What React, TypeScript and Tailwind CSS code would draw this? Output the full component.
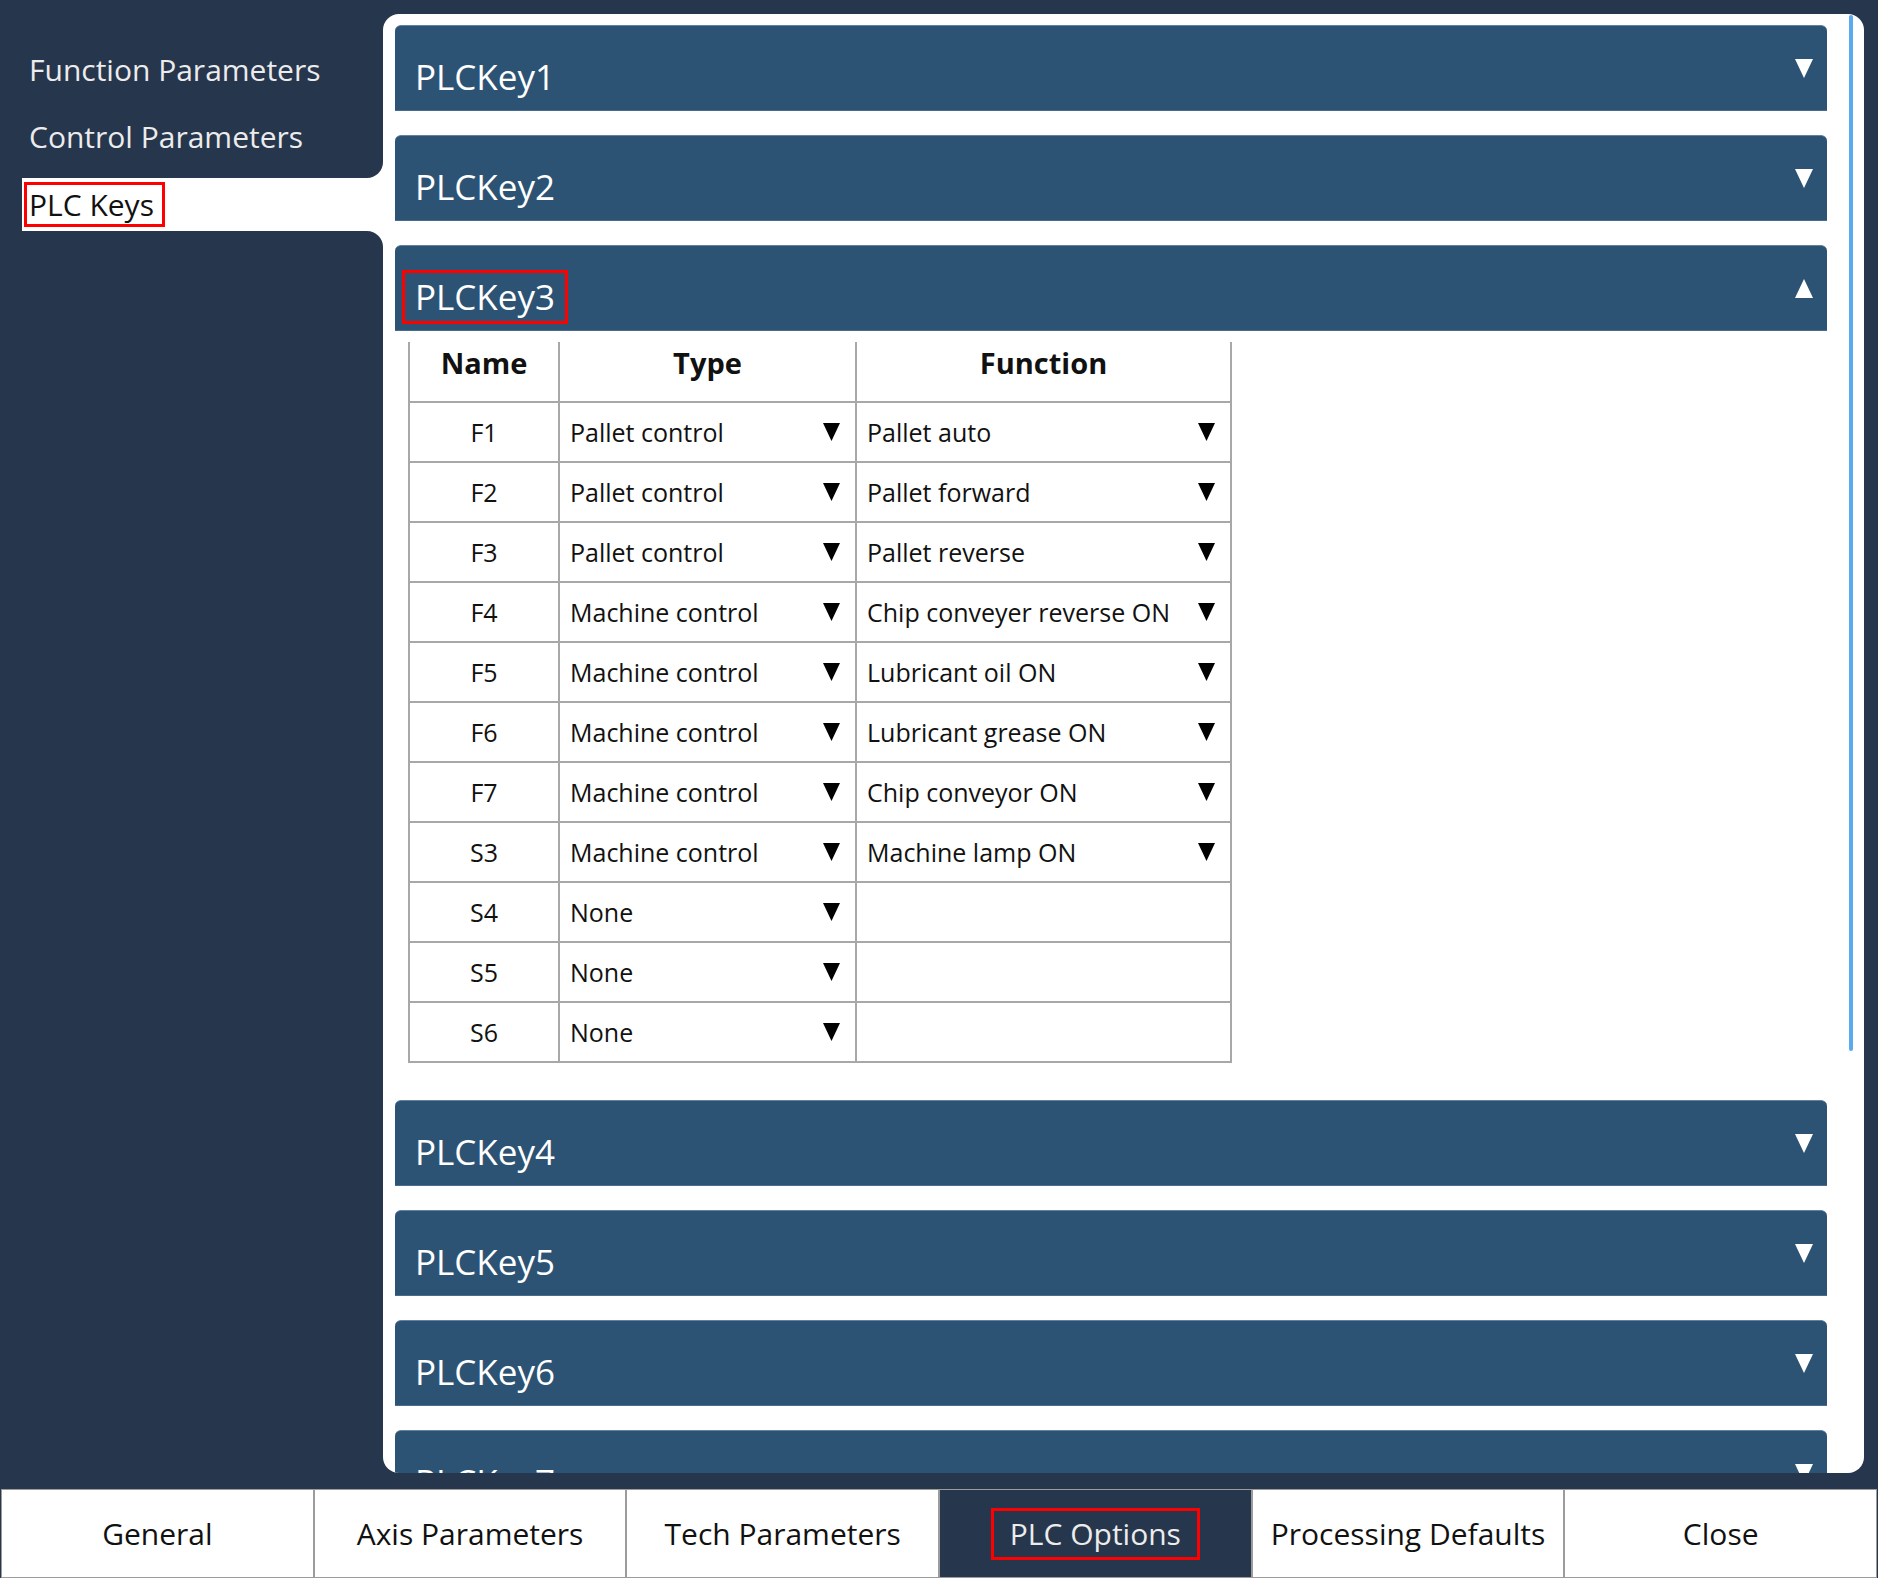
const rows = [
  { name: "F1", type: "Pallet control", fn: "Pallet auto" },
  { name: "F2", type: "Pallet control", fn: "Pallet forward" },
  { name: "F3", type: "Pallet control", fn: "Pallet reverse" },
  { name: "F4", type: "Machine control", fn: "Chip conveyer reverse ON" },
  { name: "F5", type: "Machine control", fn: "Lubricant oil ON" },
  { name: "F6", type: "Machine control", fn: "Lubricant grease ON" },
  { name: "F7", type: "Machine control", fn: "Chip conveyor ON" },
  { name: "S3", type: "Machine control", fn: "Machine lamp ON" },
  { name: "S4", type: "None", fn: "" },
  { name: "S5", type: "None", fn: "" },
  { name: "S6", type: "None", fn: "" },
];

const tabs = [
  "General",
  "Axis Parameters",
  "Tech Parameters",
  "PLC Options",
  "Processing Defaults",
  "Close",
];

function Caret({ up = false, color = "#ffffff", w = 18, h = 19 }) {
  return (
    <svg width={w} height={h} viewBox={`0 0 ${w} ${h}`} className="shrink-0">
      {up ? (
        <polygon points={`${w / 2},0 ${w},${h} 0,${h}`} fill={color} />
      ) : (
        <polygon points={`0,0 ${w},0 ${w / 2},${h}`} fill={color} />
      )}
    </svg>
  );
}

function KeyHeader({ label, open = false, marked = false }) {
  return (
    <div className="flex h-[86px] items-start justify-between rounded-t-[6px] border-t border-[#62819c] border-b border-b-[#4a6c8c] bg-[#2c5373] pl-[7px] pr-[14px]">
      <span
        className={`mt-[24px] inline-block border-[3px] px-[10px] text-[35px] leading-[48px] text-white ${
          marked ? "border-[#ff0000]" : "border-transparent"
        }`}
      >
        {label}
      </span>
      <div className="mt-[33px]">
        <Caret up={open} />
      </div>
    </div>
  );
}

function KeyTable() {
  const cell = "border-2 border-[#a8a8a8]";
  const head = `${cell} border-t-0 pt-[1px] align-top text-[29px] font-bold leading-[40px]`;
  return (
    <table className="ml-[13px] mt-[11px] mb-[37px] w-[822px] table-fixed border-collapse text-[#111111]">
      <thead>
        <tr className="h-[60px]">
          <th className={`${head} w-[150px]`}>Name</th>
          <th className={`${head} w-[297px]`}>Type</th>
          <th className={`${head} w-[375px]`}>Function</th>
        </tr>
      </thead>
      <tbody>
        {rows.map((r) => (
          <tr key={r.name} className="h-[60px] text-[25px] leading-[34px]">
            <td className={`${cell} text-center`}>{r.name}</td>
            <td className={cell}>
              <div className="flex items-center justify-between pl-[10px] pr-[15px]">
                <span>{r.type}</span>
                <Caret color="#000000" w={17} h={18} />
              </div>
            </td>
            <td className={cell}>
              {r.fn && (
                <div className="flex items-center justify-between pl-[10px] pr-[15px]">
                  <span className="whitespace-nowrap">{r.fn}</span>
                  <Caret color="#000000" w={17} h={18} />
                </div>
              )}
            </td>
          </tr>
        ))}
      </tbody>
    </table>
  );
}

export default function App() {
  return (
    <div
      className="flex h-[1578px] w-[1878px] flex-col overflow-hidden bg-[#26364c]"
      style={{ fontFamily: '"Open Sans", "Liberation Sans", sans-serif' }}
    >
      <div className="flex h-[1489px] shrink-0">
        {/* side menu */}
        <div className="flex w-[383px] flex-col bg-white text-[30px] leading-[40px]">
          <div className="flex h-[178px] flex-col gap-[27px] rounded-br-[16px] bg-[#26364c] pl-[29px] pt-[50px] text-[#ececec]">
            <span>Function Parameters</span>
            <span>Control Parameters</span>
          </div>
          <div className="flex h-[53px]">
            <div className="w-[22px] bg-[#26364c]" />
            <div className="flex-1 bg-white pl-[2px] pt-[4px]">
              <span className="inline-block border-[3px] border-[#ff0000] pl-[2px] pr-[8px] leading-[39px] text-[#111111]">
                PLC Keys
              </span>
            </div>
          </div>
          <div className="flex-1 rounded-tr-[16px] bg-[#26364c]" />
        </div>

        {/* content panel */}
        <div className="flex-1 pb-[16px] pr-[14px] pt-[14px]">
          <div className="flex h-full overflow-hidden rounded-[16px] bg-white">
            <div className="w-[1444px] shrink-0 pl-[12px] pt-[11px]">
              <div className="mb-[24px]">
                <KeyHeader label="PLCKey1" />
              </div>
              <div className="mb-[24px]">
                <KeyHeader label="PLCKey2" />
              </div>
              <KeyHeader label="PLCKey3" open marked />
              <KeyTable />
              <div className="mb-[24px]">
                <KeyHeader label="PLCKey4" />
              </div>
              <div className="mb-[24px]">
                <KeyHeader label="PLCKey5" />
              </div>
              <div className="mb-[24px]">
                <KeyHeader label="PLCKey6" />
              </div>
              <div className="mb-[24px]">
                <KeyHeader label="PLCKey7" />
              </div>
            </div>
            <div className="ml-[22px] mt-[1px] h-[1036px] w-[4px] shrink-0 rounded-full bg-[#5aaaf0]" />
          </div>
        </div>
      </div>

      {/* bottom tabs */}
      <div className="flex h-[89px] shrink-0 px-[1px]">
        {tabs.map((t) => {
          const active = t === "PLC Options";
          return (
            <div
              key={t}
              className={`flex flex-1 items-center justify-center border border-[#9c9c9c] text-[30px] leading-[40px] ${
                active ? "bg-[#26364c] text-[#ececec]" : "bg-white text-[#111111]"
              }`}
            >
              {active ? (
                <span className="inline-block border-[3px] border-[#ff0000] px-[16px] py-[3px]">
                  {t}
                </span>
              ) : (
                <span>{t}</span>
              )}
            </div>
          );
        })}
      </div>
    </div>
  );
}
